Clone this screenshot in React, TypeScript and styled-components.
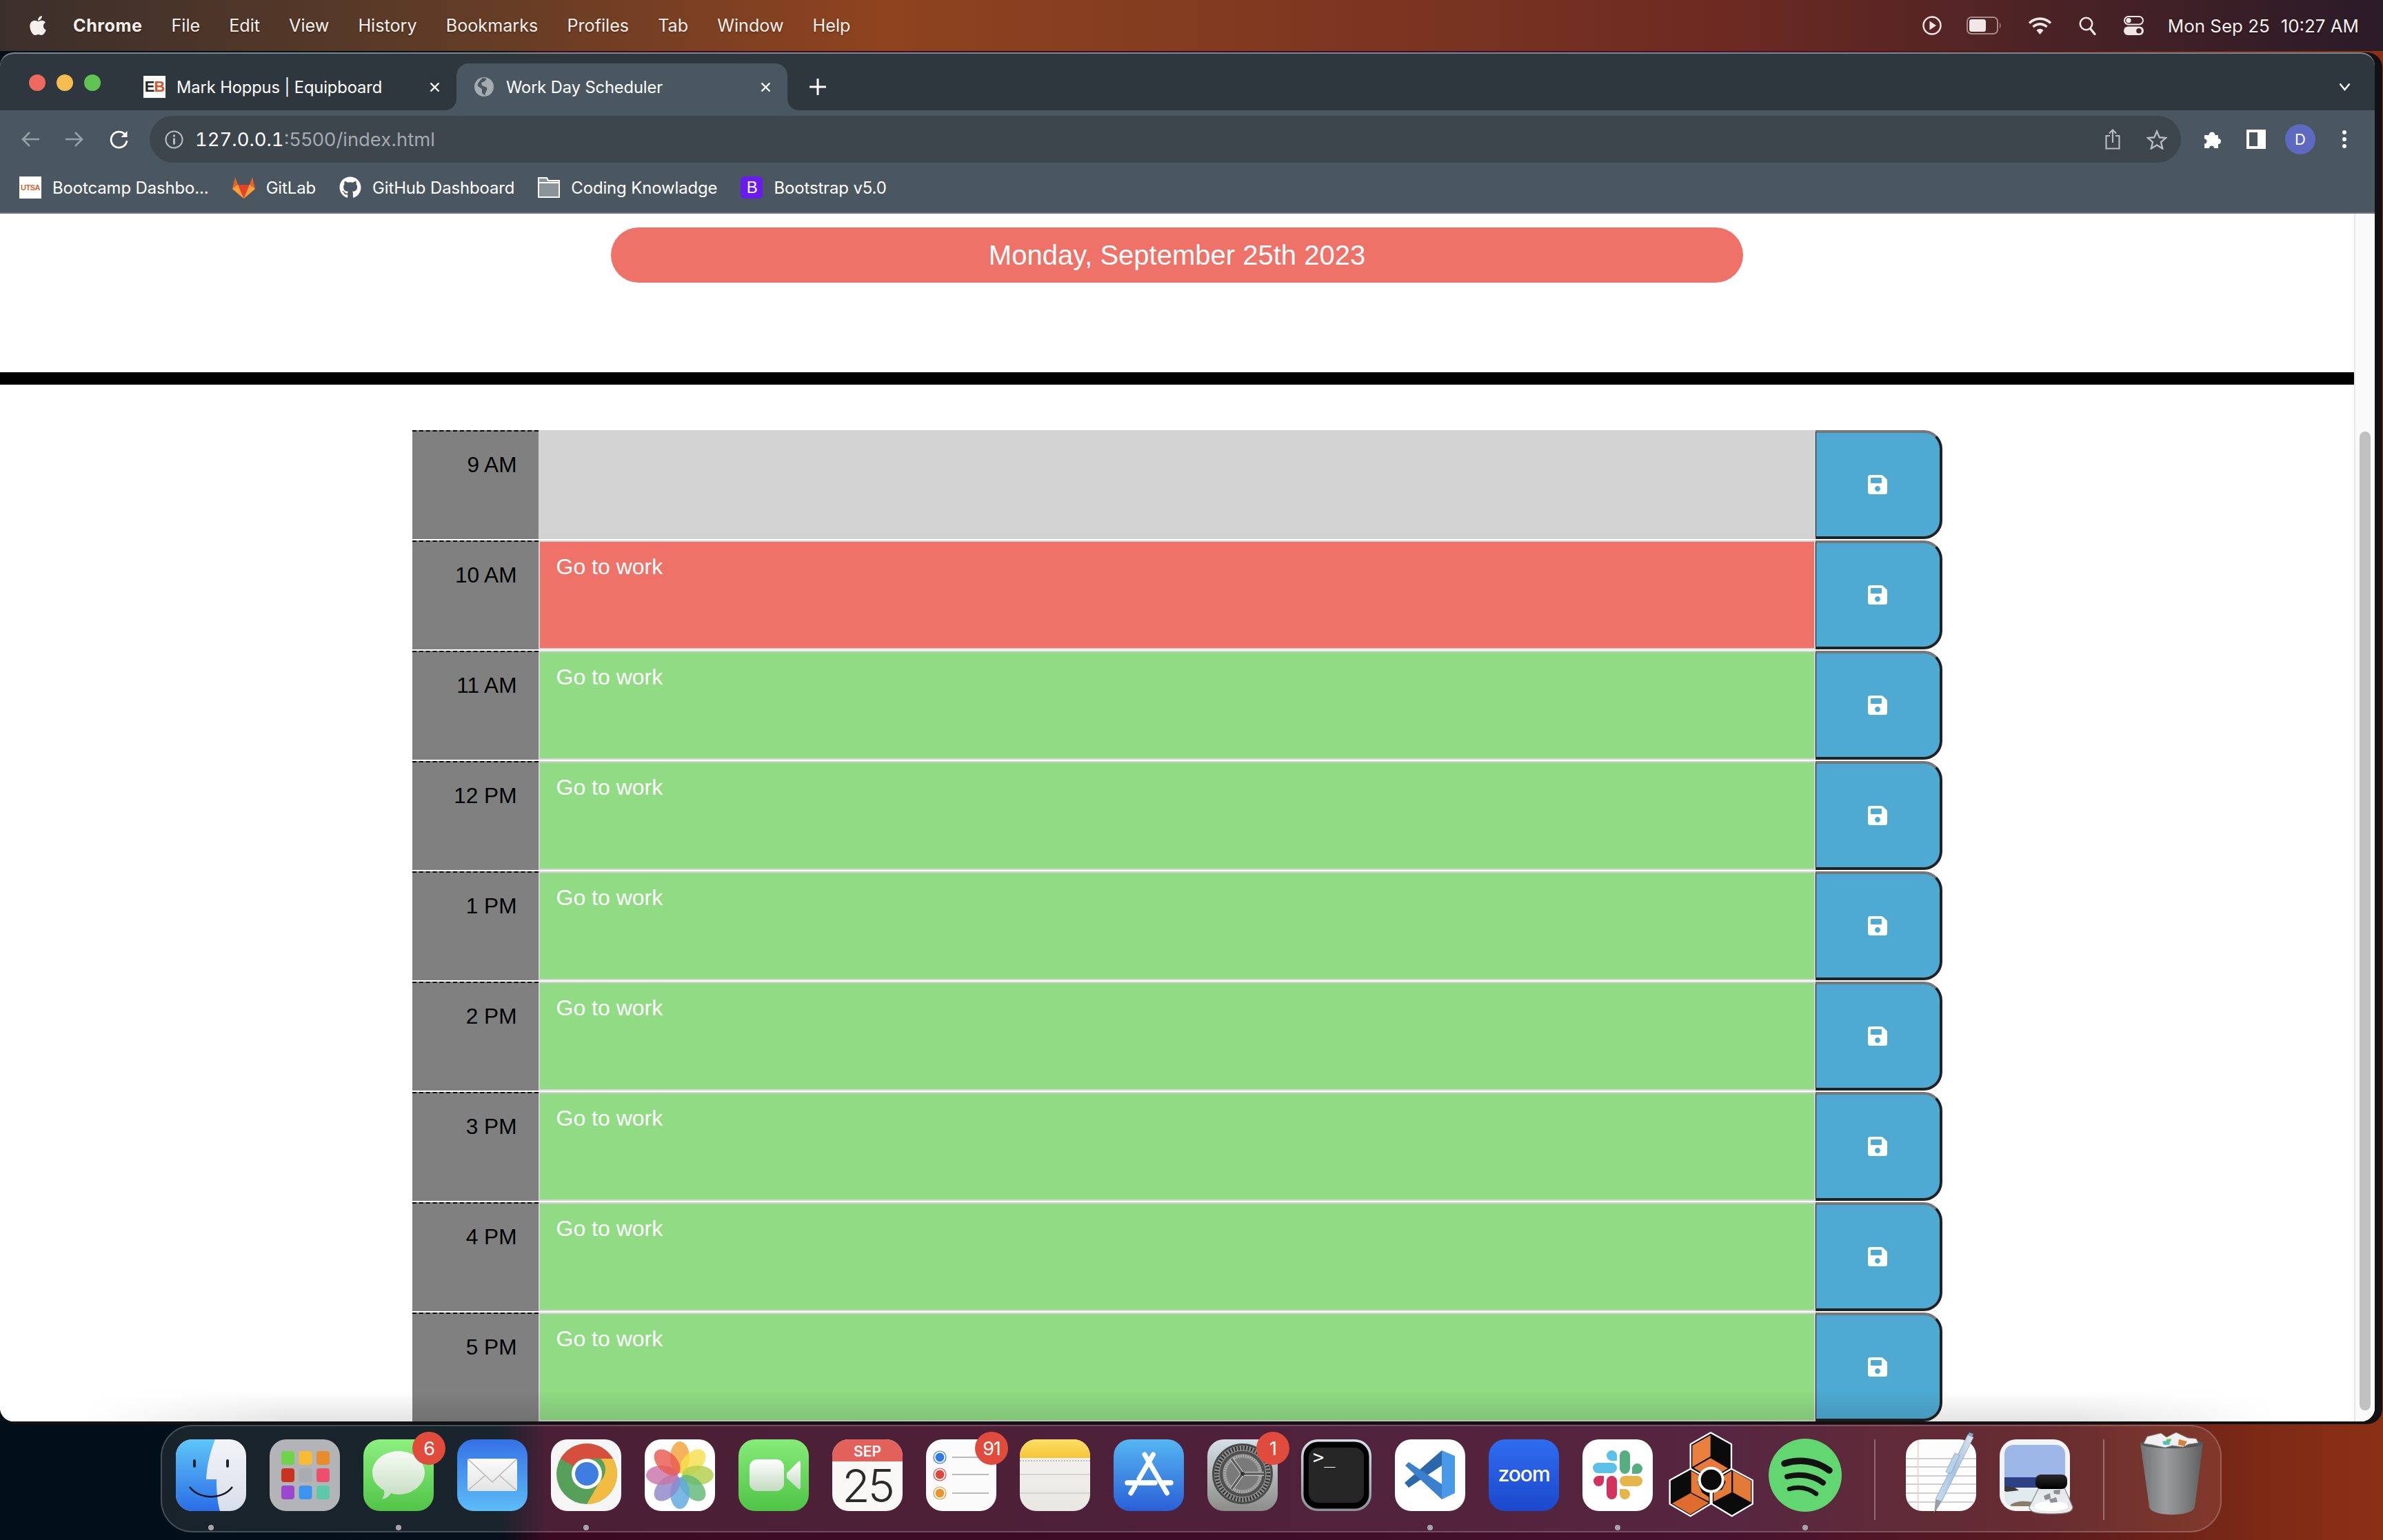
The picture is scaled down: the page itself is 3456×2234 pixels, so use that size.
import React from 'react';
import styled, { createGlobalStyle } from 'styled-components';
import { FaSave, FaApple, FaGithub } from 'react-icons/fa';

const Global = createGlobalStyle`
  html, body { margin: 0; padding: 0; background: #000; }
  * { box-sizing: border-box; }
`;

const Desktop = styled.div`
  position: relative;
  width: 3456px;
  height: 2234px;
  overflow: hidden;
  display: flex;
  flex-direction: column;
  font-family: Inter, "Liberation Sans", sans-serif;
  background: linear-gradient(90deg, #020e18 0, #05101a 21%, #3b0a22 23%, #3e0c28 50%, #47122f 72%, #5a1a1e 86%, #7d2a15 95%, #8c3015 100%);
`;

/* ---------- menu bar ---------- */
const MenuBar = styled.header`
  height: 74px;
  flex: none;
  display: flex;
  align-items: center;
  padding: 0 35px 0 40px;
  color: #f4efec;
  font-size: 25.2px;
  background: linear-gradient(90deg, #3b2f2b 0, #5c3b27 17%, #8f431f 37%, #833c20 50%, #6e2a22 72%, #4d2325 85%, #2a1b28 100%);
  text-shadow: 0 1px 3px rgba(0,0,0,.35);
`;
const AppleMark = styled(FaApple)`
  width: 30px;
  height: 32px;
  margin-right: 36px;
`;
const MenuList = styled.nav`
  display: flex;
  gap: 42px;
`;
const MenuItem = styled.span<{ $strong?: boolean }>`
  font-weight: ${p => (p.$strong ? 700 : 400)};
  letter-spacing: ${p => (p.$strong ? '0.5px' : '0')};
`;
const StatusArea = styled.div`
  margin-left: auto;
  display: flex;
  align-items: center;
`;
const StatusIcon = styled.svg<{ $gap: number }>`
  margin-right: ${p => p.$gap}px;
  display: block;
`;
const Clock = styled.span`
  display: flex;
  gap: 16px;
  font-size: 25.9px;
`;

/* ---------- browser window ---------- */
const WindowBack = styled.div`
  margin-top: 2px;
  flex: none;
  width: 3455px;
  height: 1990px;
  background: #121214;
  border-radius: 22px;
`;
const BrowserWindow = styled.main`
  position: relative;
  width: 3444px;
  height: 1986px;
  border-radius: 20px;
  overflow: hidden;
  background: #fff;
  display: flex;
  flex-direction: column;
  border-top: 2px solid #7b8790;
`;
const TabStrip = styled.div`
  height: 82px;
  flex: none;
  display: flex;
  align-items: flex-end;
  background: #2f373e;
  padding-left: 42px;
  color: #fff;
`;
const Lights = styled.div`
  align-self: center;
  display: flex;
  gap: 16px;
  margin-right: 36px;
  margin-top: 2px;
`;
const Light = styled.span<{ $c: string }>`
  width: 24px;
  height: 24px;
  border-radius: 50%;
  background: ${p => p.$c};
`;
const Tab = styled.div<{ $active?: boolean }>`
  position: relative;
  width: 480px;
  height: 68px;
  display: flex;
  align-items: center;
  padding: 0 24px 0 26px;
  gap: ${p => (p.$active ? 18 : 16)}px;
  font-size: 23.7px;
  letter-spacing: -0.1px;
  border-radius: 18px 18px 0 0;
  background: ${p => (p.$active ? '#4a5761' : 'transparent')};
  ${p => p.$active && `
    &::before, &::after {
      content: '';
      position: absolute;
      bottom: 0;
      width: 16px;
      height: 16px;
    }
    &::before { left: -16px; background: radial-gradient(circle at 0 0, transparent 15.5px, #4a5761 16px); }
    &::after { right: -16px; background: radial-gradient(circle at 100% 0, transparent 15.5px, #4a5761 16px); }
  `}
`;
const TabTitle = styled.span`
  flex: 1;
  white-space: nowrap;
`;
const Favicon = styled.span`
  width: 32px;
  height: 32px;
  flex: none;
  background: #fff;
  display: flex;
  align-items: center;
  justify-content: center;
  font: 700 22px "Liberation Sans", sans-serif;
  letter-spacing: -1px;
  color: #222;
`;
const FaviconB = styled.span`
  color: #d5582a;
`;
const PlusIcon = styled.svg`
  margin: 0 0 22px 32px;
  display: block;
`;
const TabMenu = styled.svg`
  margin: 0 35px 28px auto;
  display: block;
`;
const Toolbar = styled.div`
  height: 76px;
  flex: none;
  background: #4a5761;
  display: flex;
  padding: 8px 0 0 31px;
  align-items: center;
`;
const NavIcon = styled.svg<{ $left?: number }>`
  display: block;
  flex: none;
  margin-left: ${p => p.$left || 0}px;
`;
const Address = styled.div`
  width: 2946px;
  height: 68px;
  flex: none;
  margin: 0 31px;
  border-radius: 34px;
  background: #3e464d;
  display: flex;
  align-items: center;
  padding: 0 20px 0 22px;
`;
const Url = styled.span`
  margin-left: 17px;
  font-size: 27.4px;
  font-feature-settings: "tnum";
  color: #fff;
`;
const UrlRest = styled.span`
  color: #a4a9ad;
  font-feature-settings: normal;
`;
const PushRight = styled.span`
  margin-left: auto;
`;
const Avatar = styled.span`
  width: 44px;
  height: 44px;
  border-radius: 50%;
  background: #5d6abf;
  color: #fff;
  font-size: 22px;
  margin-left: 28px;
  flex: none;
  display: flex;
  align-items: center;
  justify-content: center;
`;
const BookmarkBar = styled.div`
  height: 74px;
  flex: none;
  background: #4a5761;
  border-bottom: 2px solid #6c7881;
  display: flex;
  align-items: center;
  padding-left: 28px;
  gap: 34px;
  color: #fff;
  font-size: 23.9px;
  letter-spacing: -0.1px;
`;
const Bookmark = styled.div`
  display: flex;
  align-items: center;
  gap: 16px;
  white-space: nowrap;
`;
const BookmarkGlyph = styled.span`
  width: 32px;
  height: 32px;
  flex: none;
  background: #fff;
  color: #d8622e;
  font: 700 11px "Liberation Sans", sans-serif;
  letter-spacing: -0.5px;
  display: flex;
  align-items: center;
  justify-content: center;
`;
const BootstrapGlyph = styled(BookmarkGlyph)`
  background: #6a1cf0;
  color: #fff;
  font-size: 24px;
  font-weight: 400;
  border-radius: 5px;
`;
const GithubGlyph = styled(FaGithub)`
  width: 32px;
  height: 32px;
  flex: none;
`;

/* ---------- scheduler page ---------- */
const Viewport = styled.div`
  flex: 1;
  min-height: 0;
  display: flex;
  overflow: hidden;
  background: #fff;
`;
const Page = styled.div`
  width: 3414px;
  flex: none;
  padding-top: 20px;
  display: flex;
  flex-direction: column;
  font-family: "Liberation Sans", Arial, sans-serif;
`;
const DatePill = styled.div`
  width: 1642px;
  height: 80px;
  align-self: center;
  border-radius: 40px;
  background: #ee7267;
  color: #fff;
  font-size: 40px;
  display: flex;
  align-items: center;
  justify-content: center;
`;
const Rule = styled.hr`
  margin: 130px 0 66px;
  height: 18px;
  border: 0;
  background: #000;
  flex: none;
`;
const Rows = styled.section`
  width: 2219px;
  align-self: center;
  display: flex;
  flex-direction: column;
  gap: 2px;
`;
const Row = styled.div`
  height: 158px;
  flex: none;
  display: grid;
  grid-template-columns: 183px 1fr 184px;
`;
const Hour = styled.div`
  background: #808080;
  border-top: 2px dashed #000;
  color: #000;
  font-size: 31.6px;
  text-align: right;
  padding: 30px 31px 0 0;
`;
const EVENT_BG = { past: '#d3d3d3', present: '#ee7267', future: '#90db84' };
const EventCell = styled.div<{ $tense: keyof typeof EVENT_BG }>`
  background: ${p => EVENT_BG[p.$tense]};
  border: 2px solid #d3d3d3;
  color: #fff;
  font-size: 32px;
  padding: 18px 0 0 24px;
`;
const SaveButton = styled.button`
  background: #4eaad2;
  color: #fff;
  border-style: solid;
  border-width: 4px 4px 4px 1px;
  border-color: #777 #222 #222 #111;
  border-radius: 0 27px 27px 0;
  padding: 0;
  display: flex;
  align-items: center;
  justify-content: center;
`;
const SaveGlyph = styled(FaSave)`
  width: 32px;
  height: 32px;
`;
const ScrollTrack = styled.div`
  width: 30px;
  flex: none;
  background: #fafafa;
  border-left: 2px solid #e8e8e8;
  padding: 316px 6px 0 6px;
`;
const ScrollThumb = styled.div`
  height: 1420px;
  border-radius: 8px;
  background: #c1c1c1;
`;
const DockShadow = styled.div`
  position: absolute;
  left: 0;
  right: 0;
  bottom: 0;
  height: 44px;
  pointer-events: none;
  background: linear-gradient(180deg, rgba(0,0,0,0), rgba(0,0,0,.11));
  mask-image: linear-gradient(90deg, transparent 120px, #000 420px, #000 3000px, transparent 3300px);
`;

/* ---------- dock ---------- */
const Dock = styled.footer`
  margin: 1px 0 0 233px;
  width: 2989px;
  height: 156px;
  flex: none;
  border: 2px solid rgba(255,255,255,.2);
  border-radius: 46px;
  background: rgba(255,255,255,.085);
  display: flex;
  gap: 34px;
  padding: 19px 0 0 20px;
`;
const DockItem = styled.div`
  position: relative;
  width: 102px;
  height: 104px;
  flex: none;
`;
const TileSvg = styled.svg`
  display: block;
  width: 102px;
  height: 104px;
  overflow: visible;
`;
const ReasonSvg = styled.svg`
  position: absolute;
  left: -21px;
  top: -18px;
  width: 150px;
  height: 140px;
`;
const Badge = styled.span`
  position: absolute;
  left: 71px;
  top: -11px;
  width: 48px;
  height: 48px;
  border-radius: 50%;
  background: #e14b3b;
  color: #fff;
  font: 400 27px Inter, sans-serif;
  letter-spacing: -1px;
  display: flex;
  align-items: center;
  justify-content: center;
`;
const RunDot = styled.span`
  position: absolute;
  left: 47px;
  top: 124px;
  width: 8px;
  height: 8px;
  border-radius: 50%;
  background: #a8a3ad;
`;
const DockDivider = styled.span<{ $l: number; $r: number }>`
  width: 2px;
  height: 117px;
  flex: none;
  margin: 0 ${p => p.$r}px 0 ${p => p.$l}px;
  background: rgba(255,255,255,.3);
`;

/* ---------- dock drawings ---------- */
const Tile = ({ children, defs }: { children: React.ReactNode; defs?: React.ReactNode }) => (
  <TileSvg viewBox="0 0 102 104">
    {defs && <defs>{defs}</defs>}
    {children}
  </TileSvg>
);
const Grad = ({ id, a, b }: { id: string; a: string; b: string }) => (
  <linearGradient id={id} x1="0" y1="0" x2="0" y2="1">
    <stop offset="0" stopColor={a} />
    <stop offset="1" stopColor={b} />
  </linearGradient>
);
const R = 24;

const Finder = () => (
  <Tile defs={<>
    <Grad id="fb" a="#5fc6f9" b="#2a6de6" />
    <Grad id="fw" a="#f2f4f8" b="#d8deeb" />
    <clipPath id="fc"><rect width="102" height="104" rx={R} /></clipPath>
  </>}>
    <g clipPath="url(#fc)">
      <rect width="102" height="104" fill="url(#fw)" />
      <path d="M0 0H57C50 18 45 38 44 58H59C59 74 60 90 64 104H0Z" fill="url(#fb)" />
    </g>
    <rect x="25" y="29" width="4" height="12" rx="2" fill="#1c2530" />
    <rect x="73" y="29" width="4" height="12" rx="2" fill="#1c2530" />
    <path d="M20 69C34 88 68 88 82 69" fill="none" stroke="#151a22" strokeWidth="2.5" />
  </Tile>
);
const Launchpad = () => {
  const colors = ['#6fd44a', '#f8bb33', '#e98c2c', '#c8321f', '#a8adb0', '#ee4f6a', '#9a48d0', '#3a95f0', '#5cc9a8'];
  return (
    <Tile>
      <rect width="102" height="104" rx={R} fill="#b2b4b7" />
      {colors.map((c, i) => (
        <rect key={c} x={17 + (i % 3) * 25.5} y={17 + Math.floor(i / 3) * 25} width="19" height="20" rx="4" fill={c} />
      ))}
    </Tile>
  );
};
const Messages = () => (
  <Tile defs={<><Grad id="mg" a="#8cf07f" b="#50c548" /><Grad id="mw" a="#f6fbf4" b="#c4dcc0" /></>}>
    <rect width="102" height="104" rx={R} fill="url(#mg)" />
    <path d="M30 74C20 68 13 60 13 48 13 31 30 17 51 17S89 31 89 48 72 80 51 80C47 80 43 79 40 78 38 82 33 86 27 87 30 83 31 78 30 74Z" fill="url(#mw)" />
  </Tile>
);
const Mail = () => (
  <Tile defs={<><Grad id="ma" a="#3571e6" b="#5cbdf7" /><Grad id="me" a="#fbfbfb" b="#e4e4e4" /></>}>
    <rect width="102" height="104" rx={R} fill="url(#ma)" />
    <rect x="15" y="28" width="72" height="47" rx="3" fill="url(#me)" />
    <path d="M16 29L51 62 86 29M16 74L41 52M86 74L61 52" fill="none" stroke="#b9b9b9" strokeWidth="1.6" />
  </Tile>
);
const Chrome = () => (
  <Tile>
    <rect width="102" height="104" rx={R} fill="#f6f6f6" />
    <circle cx="52" cy="50" r="44" fill="#57a05a" />
    <path d="M14 28A44 44 0 0 1 90 28H52A22 22 0 0 0 33 39Z" fill="#d64f3c" />
    <path d="M90 28A44 44 0 0 1 52 94L71 61A22 22 0 0 0 72 28Z" fill="#f2bc42" />
    <circle cx="52" cy="50" r="22" fill="#fff" />
    <circle cx="52" cy="50" r="17" fill="#3f7de0" />
  </Tile>
);
const Photos = () => {
  const colors = ['#f5a13a', '#f5e04a', '#b2d04a', '#60b878', '#5fa8e0', '#8f86c8', '#c875a8', '#e85a50'];
  return (
    <Tile>
      <rect width="102" height="104" rx={R} fill="#fff" />
      {colors.map((c, i) => (
        <ellipse key={c} cx="51" cy="26" rx="14" ry="23" fill={c} opacity=".82" transform={`rotate(${i * 45} 51 52)`} />
      ))}
      <circle cx="51" cy="52" r="2" fill="#fff" />
    </Tile>
  );
};
const FaceTime = () => (
  <Tile defs={<><Grad id="ft" a="#85ec78" b="#4fc447" /><Grad id="fv" a="#fff" b="#c4d9c2" /></>}>
    <rect width="102" height="104" rx={R} fill="url(#ft)" />
    <rect x="16" y="29" width="50" height="46" rx="11" fill="url(#fv)" />
    <path d="M70 49L87 32C88.5 31 90 32 90 34V70C90 72 88.5 73 87 72L70 56Z" fill="url(#fv)" />
  </Tile>
);
const Calendar = () => (
  <Tile defs={<clipPath id="cc"><rect width="102" height="104" rx={R} /></clipPath>}>
    <g clipPath="url(#cc)">
      <rect width="102" height="104" fill="#f9f8f6" />
      <rect width="102" height="32" fill="#e2625b" />
    </g>
    <text x="51" y="25" textAnchor="middle" fontFamily="Inter, sans-serif" fontWeight="600" fontSize="21" fill="#fff">SEP</text>
    <text x="51" y="91" textAnchor="middle" fontFamily="Inter, sans-serif" fontWeight="300" fontSize="66" letterSpacing="-3" fill="#2a2a2a">25</text>
  </Tile>
);
const Reminders = () => (
  <Tile>
    <rect width="102" height="104" rx={R} fill="#fbfbfb" />
    {[['#2f78ea', 26], ['#e0443a', 51], ['#ea9430', 78]].map(([c, y]) => (
      <g key={c as string}>
        <circle cx="20" cy={y as number} r="7" fill={c as string} stroke="#fff" strokeWidth="1.2" />
        <circle cx="20" cy={y as number} r="9" fill="none" stroke={c as string} strokeWidth="1.2" />
        <rect x="38" y={(y as number) - 1} width="53" height="2" fill="#bbb" />
      </g>
    ))}
  </Tile>
);
const Notes = () => (
  <Tile defs={<>
    <Grad id="ny" a="#fbdf63" b="#f7c53a" />
    <Grad id="nb" a="#f6f4f0" b="#e9e7e2" />
    <clipPath id="nc"><rect width="102" height="104" rx={R} /></clipPath>
  </>}>
    <g clipPath="url(#nc)">
      <rect width="102" height="104" fill="url(#nb)" />
      <rect width="102" height="27" fill="url(#ny)" />
      <line x1="0" y1="31" x2="102" y2="31" stroke="#bbb" strokeWidth="2" strokeDasharray="2 2" />
      <rect y="50" width="102" height="2" fill="#d6d4d0" />
      <rect y="77" width="102" height="2" fill="#d6d4d0" />
    </g>
  </Tile>
);
const AppStore = () => (
  <Tile defs={<Grad id="as" a="#55b6f1" b="#2a5fd8" />}>
    <rect width="102" height="104" rx={R} fill="url(#as)" />
    <path d="M57.5 22L37 57M31 68L25 78M45 22L77.5 78" stroke="#fff" strokeWidth="7" strokeLinecap="round" fill="none" />
    <path d="M20 63H60M70 63H83" stroke="#fff" strokeWidth="7.5" strokeLinecap="round" />
  </Tile>
);
const Settings = () => (
  <Tile defs={<Grad id="st" a="#d5e0e6" b="#8c8c8a" />}>
    <rect width="102" height="104" rx={R} fill="url(#st)" />
    <circle cx="51" cy="50" r="44" fill="#8b8b8b" />
    <circle cx="51" cy="50" r="42.5" fill="none" stroke="#4a4a4a" strokeWidth="3" />
    <circle cx="51" cy="50" r="37.5" fill="none" stroke="#2e2e2e" strokeWidth="6" strokeDasharray="2 2.6" />
    <circle cx="51" cy="50" r="31" fill="none" stroke="#505050" strokeWidth="4.5" />
    <circle cx="51" cy="50" r="26" fill="none" stroke="#b0b0b0" strokeWidth="4" strokeDasharray="1.6 1.8" />
    <circle cx="51" cy="50" r="23" fill="#7a7a7a" />
    <path d="M51 50L35 28M51 50H82M51 50L35 72" stroke="#dadada" strokeWidth="5.5" />
    <path d="M51 50L35 28M51 50H82M51 50L35 72" stroke="#5c5c5c" strokeWidth="3.5" />
    <circle cx="51" cy="50" r="3" fill="#333" />
  </Tile>
);
const Terminal = () => (
  <Tile defs={<Grad id="tm" a="#d3e0e4" b="#8b9296" />}>
    <rect width="102" height="104" rx={R} fill="url(#tm)" />
    <rect x="3.5" y="3.5" width="95" height="97" rx="21" fill="#000" />
    <rect x="11" y="12" width="80" height="80" rx="14" fill="#262626" />
    <text x="17" y="35" fontFamily="'DejaVu Sans Mono', monospace" fontSize="27" fill="#fff">&gt;_</text>
  </Tile>
);
const VSCode = () => (
  <Tile>
    <rect width="102" height="104" rx={R} fill="#fff" />
    <path d="M68 16V38L20 70 14 63Z" fill="#2a67ab" />
    <path d="M15 38L20 33 68 65V87Z" fill="#3a80cc" />
    <path d="M68 16L87 24V78L68 87Z" fill="#4a98e8" />
  </Tile>
);
const Zoom = () => (
  <Tile defs={<Grad id="zm" a="#2f6cf0" b="#1c48cc" />}>
    <rect width="102" height="104" rx={R} fill="url(#zm)" />
    <text x="51" y="61" textAnchor="middle" fontFamily="Inter, sans-serif" fontWeight="500" fontSize="30" letterSpacing="-1" fill="#fff">zoom</text>
  </Tile>
);
const Slack = () => (
  <Tile>
    <rect width="102" height="104" rx={R} fill="#fff" />
    <rect x="15" y="34" width="35" height="15" rx="7.5" fill="#5cc0ea" />
    <path d="M50 31H42.5A7.5 7.5 0 1 1 50 23.5Z" fill="#5cc0ea" />
    <rect x="54" y="16" width="15" height="34" rx="7.5" fill="#55ae80" />
    <path d="M72 50V42.5A7.5 7.5 0 1 1 79.5 50Z" fill="#55ae80" />
    <rect x="35" y="53" width="15" height="34" rx="7.5" fill="#d2325e" />
    <path d="M31 53V60.5A7.5 7.5 0 1 1 23.5 53Z" fill="#d2325e" />
    <rect x="54" y="53" width="33" height="15" rx="7.5" fill="#e5b54a" />
    <path d="M54 72H61.5A7.5 7.5 0 1 1 54 79.5Z" fill="#e5b54a" />
  </Tile>
);
const Reason = () => (
  <ReasonSvg viewBox="0 0 450 420">
    <g fill="#0b0b0b" stroke="#fff" strokeWidth="7" strokeLinejoin="round">
      <path d="M213 25L303 75V182L213 235 125 182V75Z" />
      <path d="M125 182L212 232V335L125 388 35 335V232Z" />
      <path d="M303 182L395 232V335L305 388 218 335V232Z" />
    </g>
    <path d="M133 80L212 36V128L133 174Z" fill="#e9803f" />
    <path d="M139 178L212 136 288 180 255 200 215 176 175 200Z" fill="#e8793a" />
    <path d="M128 191L170 215 156 240 175 285 205 305V325L128 285Z" fill="#e47a38" />
    <path d="M45 333L125 288 205 331 125 380Z" fill="#dd6c2e" />
    <path d="M310 191L388 235V328L310 285Z" fill="#e47a38" />
    <path d="M226 325V285L262 272 278 240 265 215 303 191V285Z" fill="#e47a38" />
    <path d="M215 280V338" stroke="#fff" strokeWidth="8" />
    <circle cx="215" cy="230" r="51" fill="#0b0b0b" stroke="#fff" strokeWidth="12" />
  </ReasonSvg>
);
const Spotify = () => (
  <Tile>
    <circle cx="51" cy="52" r="53" fill="#62d671" />
    <g fill="none" stroke="#121212" strokeLinecap="round">
      <path d="M21 35C43 28 67 31 86 45" strokeWidth="9.5" />
      <path d="M25 54C43 49 62 52 77 63" strokeWidth="8" />
      <path d="M28 72C42 68 56 71 67 79" strokeWidth="6.5" />
    </g>
  </Tile>
);
const TextEdit = () => (
  <Tile defs={<>
    <clipPath id="te"><rect width="102" height="104" rx={R} /></clipPath>
    <linearGradient id="pen" x1="0" y1="0" x2="1" y2="0">
      <stop offset="0" stopColor="#c9dff3" /><stop offset=".5" stopColor="#a5c4e2" /><stop offset="1" stopColor="#dfe6ec" />
    </linearGradient>
  </>}>
    <g clipPath="url(#te)">
      <rect width="102" height="104" fill="#fdfdfd" />
      {[27, 39, 52, 64, 77, 90].map(y => (
        <rect key={y} y={y} width="102" height="2" fill="#cfcfcf" />
      ))}
      <rect x="17" width="1.5" height="104" fill="#f3cccc" />
    </g>
    <path d="M90 -7L98 -3 52 90 43 87Z" fill="url(#pen)" stroke="#8ba2b8" strokeWidth=".8" />
    <path d="M71 20L58 47 65 50 78 23Z" fill="#b7d1ea" stroke="#7d93a8" strokeWidth=".6" />
    <path d="M43 87L52 90 41 108Z" fill="#9aa0a6" />
    <path d="M43 103L41 108 45 105Z" fill="#222" />
    <path d="M92 -10L98 -8 96 -3 90 -6Z" fill="#7ea6cc" />
  </Tile>
);
const Preview = () => (
  <Tile defs={<>
    <clipPath id="pv"><rect x="7" y="8" width="88" height="89" rx="13" /></clipPath>
    <Grad id="cap" a="#2a2a2a" b="#000" />
    <Grad id="gl" a="#dfe5ea" b="#f4f6f8" />
  </>}>
    <rect width="102" height="104" rx={R} fill="#f4f4f4" />
    <g clipPath="url(#pv)">
      <rect x="7" y="8" width="88" height="47" fill="#9db8e8" />
      <rect x="7" y="55" width="88" height="18" fill="#2d3f85" />
      <rect x="7" y="70" width="88" height="27" fill="#dfe9ee" />
      <path d="M7 68L22 70 28 74 10 76 7 75Z" fill="#3b3a38" />
      <path d="M14 97C20 89 38 88 50 92V97Z" fill="#8a7c68" />
    </g>
    <path d="M57 70H94L106 98C106 106 96 108 75 108S43 106 43 98Z" fill="url(#gl)" fillOpacity=".94" stroke="#8a8a8a" strokeWidth="1.2" />
    <ellipse cx="75" cy="97" rx="24" ry="7" fill="#fff" />
    <path d="M64 82L73 78 74 86 66 88ZM78 74L88 73 87 80 79 79ZM72 87L82 84 84 91 74 92Z" fill="#8e8f92" />
    <rect x="52" y="51" width="46" height="21" rx="8" fill="url(#cap)" />
  </Tile>
);
const Trash = () => (
  <Tile defs={<linearGradient id="tr" x1="0" x2="1" y1="0" y2="0">
    <stop offset="0" stopColor="#6f7173" /><stop offset=".4" stopColor="#9a9c9e" /><stop offset=".7" stopColor="#7e8082" /><stop offset="1" stopColor="#5c5e60" />
  </linearGradient>}>
    <path d="M8 5L21 98C24 113 84 113 87 98L99 5Z" fill="url(#tr)" />
    <ellipse cx="53.5" cy="6" rx="45.5" ry="7" fill="#55575a" />
    <path d="M13 6L18 -4 38 -9 46 -3 60 -10 77 -2 89 -1 92 5 78 7 70 11 54 9 44 12 26 8Z" fill="#f0f0f0" stroke="#8a8a8a" strokeWidth=".8" />
    <path d="M40 3L52 1 50 8 42 8Z" fill="#4ec0c8" />
    <path d="M64 0L76 3 72 10 63 8Z" fill="#d9803a" />
    <path d="M46 0L53 -1 52 3 46 4Z" fill="#6cc05a" />
  </Tile>
);

const MENUS = ['File', 'Edit', 'View', 'History', 'Bookmarks', 'Profiles', 'Tab', 'Window', 'Help'];
const HOURS: { label: string; tense: keyof typeof EVENT_BG; text: string }[] = [
  { label: '9 AM', tense: 'past', text: '' },
  { label: '10 AM', tense: 'present', text: 'Go to work' },
  { label: '11 AM', tense: 'future', text: 'Go to work' },
  { label: '12 PM', tense: 'future', text: 'Go to work' },
  { label: '1 PM', tense: 'future', text: 'Go to work' },
  { label: '2 PM', tense: 'future', text: 'Go to work' },
  { label: '3 PM', tense: 'future', text: 'Go to work' },
  { label: '4 PM', tense: 'future', text: 'Go to work' },
  { label: '5 PM', tense: 'future', text: 'Go to work' },
];
const DOCK: { Icon: React.FC; badge?: string; dot?: boolean }[] = [
  { Icon: Finder, dot: true },
  { Icon: Launchpad },
  { Icon: Messages, badge: '6', dot: true },
  { Icon: Mail },
  { Icon: Chrome, dot: true },
  { Icon: Photos },
  { Icon: FaceTime },
  { Icon: Calendar },
  { Icon: Reminders, badge: '91' },
  { Icon: Notes },
  { Icon: AppStore },
  { Icon: Settings, badge: '1' },
  { Icon: Terminal },
  { Icon: VSCode, dot: true },
  { Icon: Zoom },
  { Icon: Slack, dot: true },
  { Icon: Reason },
  { Icon: Spotify, dot: true },
];

const CloseX = () => (
  <svg width="15" height="15" viewBox="0 0 15 15" style={{ flex: 'none' }}>
    <path d="M1.5 1.5L13.5 13.5M13.5 1.5L1.5 13.5" stroke="#fff" strokeWidth="2.4" />
  </svg>
);

export default function App() {
  return (
    <Desktop>
      <Global />
      <MenuBar>
        <AppleMark />
        <MenuList>
          <MenuItem $strong>Chrome</MenuItem>
          {MENUS.map(m => <MenuItem key={m}>{m}</MenuItem>)}
        </MenuList>
        <StatusArea>
          <StatusIcon $gap={36} width="28" height="28" viewBox="0 0 28 28">
            <circle cx="14" cy="14" r="12.5" fill="none" stroke="#f0e8e6" strokeWidth="2.4" />
            <path d="M10.5 7.5L20 14 10.5 20.5Z" fill="#f0e8e6" />
          </StatusIcon>
          <StatusIcon $gap={38} width="51" height="26" viewBox="0 0 51 26">
            <rect x="1" y="1" width="44" height="24" rx="6" fill="none" stroke="#a88a88" strokeWidth="2" />
            <rect x="4" y="4" width="24" height="18" rx="3.5" fill="#f0e8e6" />
            <path d="M48 9C50 10 50 16 48 17Z" fill="#a88a88" />
          </StatusIcon>
          <StatusIcon $gap={39} width="35" height="26" viewBox="0 0 35 26">
            <g fill="none" stroke="#f0e8e6" strokeWidth="3.6">
              <path d="M2 9.5C11 1 24 1 33 9.5" />
              <path d="M7.5 15C13.5 9.5 21.5 9.5 27.5 15" />
            </g>
            <path d="M12.5 20C15.5 17 19.5 17 22.5 20L17.5 26Z" fill="#f0e8e6" />
          </StatusIcon>
          <StatusIcon $gap={40} width="25" height="27" viewBox="0 0 25 27">
            <circle cx="10.5" cy="10.5" r="8.7" fill="none" stroke="#f0e8e6" strokeWidth="2.6" />
            <path d="M16.5 17.5L23 25.5" stroke="#f0e8e6" strokeWidth="3.4" strokeLinecap="round" />
          </StatusIcon>
          <StatusIcon $gap={35} width="29" height="28" viewBox="0 0 29 28">
            <rect x="1" y="1" width="27" height="11.5" rx="5.7" fill="none" stroke="#f0e8e6" strokeWidth="2" />
            <circle cx="7" cy="6.7" r="3.6" fill="#f0e8e6" />
            <rect x="0" y="15.5" width="29" height="12.5" rx="6.2" fill="#f0e8e6" />
            <circle cx="22" cy="21.7" r="3.8" fill="#4a2025" />
          </StatusIcon>
          <Clock><span>Mon Sep 25</span><span>10:27 AM</span></Clock>
        </StatusArea>
      </MenuBar>

      <WindowBack>
        <BrowserWindow>
          <TabStrip>
            <Lights>
              <Light $c="#ee6a5e" />
              <Light $c="#f5bd4f" />
              <Light $c="#61c354" />
            </Lights>
            <Tab>
              <Favicon>E<FaviconB>B</FaviconB></Favicon>
              <TabTitle>Mark Hoppus | Equipboard</TabTitle>
              <CloseX />
            </Tab>
            <Tab $active>
              <svg width="28" height="28" viewBox="0 0 28 28" style={{ flex: 'none' }}>
                <circle cx="14" cy="14" r="14" fill="#a4abb1" />
                <path d="M12 1C7 6 4 9 5 13L11 17 11 23 16 27C14 22 20 19 18 15L11 12 10 8 15 6 18 2Z" fill="#4a5761" />
              </svg>
              <TabTitle>Work Day Scheduler</TabTitle>
              <CloseX />
            </Tab>
            <PlusIcon width="24" height="24" viewBox="0 0 24 24">
              <path d="M12 0V24M0 12H24" stroke="#fff" strokeWidth="3" />
            </PlusIcon>
            <TabMenu width="17" height="12" viewBox="0 0 17 12">
              <path d="M1.5 1.5L8.5 10 15.5 1.5" fill="none" stroke="#fff" strokeWidth="2.4" />
            </TabMenu>
          </TabStrip>

          <Toolbar>
            <NavIcon width="26" height="24" viewBox="0 0 26 24">
              <path d="M26 12H3M12 2L2 12 12 22" fill="none" stroke="#98a1a8" strokeWidth="2.6" />
            </NavIcon>
            <NavIcon $left={38} width="26" height="24" viewBox="0 0 26 24">
              <path d="M0 12H23M14 2L24 12 14 22" fill="none" stroke="#98a1a8" strokeWidth="2.6" />
            </NavIcon>
            <NavIcon $left={38} width="27" height="27" viewBox="0 0 27 27">
              <path d="M23 7A11.5 11.5 0 1 0 25 15" fill="none" stroke="#fff" strokeWidth="2.8" />
              <path d="M25.5 1V10H16.5Z" fill="#fff" />
            </NavIcon>
            <Address>
              <NavIcon width="27" height="27" viewBox="0 0 27 27">
                <circle cx="13.5" cy="13.5" r="12" fill="none" stroke="#b8bcc0" strokeWidth="2.2" />
                <rect x="12" y="11.5" width="3" height="9" fill="#b8bcc0" />
                <rect x="12" y="6.5" width="3" height="3" fill="#b8bcc0" />
              </NavIcon>
              <Url>127.0.0.1<UrlRest>:5500/index.html</UrlRest></Url>
              <PushRight />
              <NavIcon width="22" height="30" viewBox="0 0 22 30">
                <path d="M7 10H1.5V28.5H20.5V10H15" fill="none" stroke="#b8bcc0" strokeWidth="2.2" />
                <path d="M11 20V2M6 6.5L11 1.5 16 6.5" fill="none" stroke="#b8bcc0" strokeWidth="2.2" />
              </NavIcon>
              <NavIcon $left={38} width="30" height="29" viewBox="0 0 30 29">
                <path d="M15 2.5L18.7 11.3 28.2 12 21 18.2 23.2 27.5 15 22.5 6.8 27.5 9 18.2 1.8 12 11.3 11.3Z" fill="none" stroke="#b8bcc0" strokeWidth="2.4" />
              </NavIcon>
            </Address>
            <NavIcon width="28" height="28" viewBox="0 0 28 28">
              <path d="M3 8H9.5A4.5 4.5 0 1 1 18.5 8H23V13A4 4 0 1 1 23 21V27H17A3.5 3.5 0 0 0 10 27H3V20.5A3.5 3.5 0 0 0 3 13.5Z" fill="#fff" />
            </NavIcon>
            <NavIcon $left={36} width="28" height="28" viewBox="0 0 28 28">
              <rect width="28" height="28" fill="#fff" />
              <rect x="4" y="4" width="12" height="20" fill="#4a5761" />
            </NavIcon>
            <Avatar>D</Avatar>
            <NavIcon $left={36} width="12" height="28" viewBox="0 0 12 28">
              <circle cx="6" cy="4" r="3" fill="#fff" />
              <circle cx="6" cy="14" r="3" fill="#fff" />
              <circle cx="6" cy="24" r="3" fill="#fff" />
            </NavIcon>
          </Toolbar>

          <BookmarkBar>
            <Bookmark><BookmarkGlyph>UTSA</BookmarkGlyph>Bootcamp Dashbo...</Bookmark>
            <Bookmark>
              <svg width="33" height="32" viewBox="0 0 33 32" style={{ flex: 'none' }}>
                <path d="M4 1L8 12H25L29 1 33 18 16.5 32 0 18Z" fill="#e8632c" />
                <path d="M8 12H25L16.5 32Z" fill="#e24329" />
                <path d="M0 18L8 12 16.5 32ZM33 18L25 12 16.5 32Z" fill="#f9a23a" />
              </svg>
              GitLab
            </Bookmark>
            <Bookmark><GithubGlyph />GitHub Dashboard</Bookmark>
            <Bookmark>
              <svg width="32" height="30" viewBox="0 0 32 30" style={{ flex: 'none' }}>
                <path d="M1 1H13L15 5H31V29H1Z" fill="#8b949b" stroke="#fff" strokeWidth="2" />
                <path d="M1 8H31" stroke="#fff" strokeWidth="2" />
              </svg>
              Coding Knowladge
            </Bookmark>
            <Bookmark><BootstrapGlyph>B</BootstrapGlyph>Bootstrap v5.0</Bookmark>
          </BookmarkBar>

          <Viewport>
            <Page>
              <DatePill>Monday, September 25th 2023</DatePill>
              <Rule />
              <Rows>
                {HOURS.map(h => (
                  <Row key={h.label}>
                    <Hour>{h.label}</Hour>
                    <EventCell $tense={h.tense}>{h.text}</EventCell>
                    <SaveButton aria-label="Save"><SaveGlyph /></SaveButton>
                  </Row>
                ))}
              </Rows>
            </Page>
            <ScrollTrack><ScrollThumb /></ScrollTrack>
          </Viewport>
          <DockShadow />
        </BrowserWindow>
      </WindowBack>

      <Dock>
        {DOCK.map(({ Icon, badge, dot }, i) => (
          <DockItem key={i}>
            <Icon />
            {badge && <Badge>{badge}</Badge>}
            {dot && <RunDot />}
          </DockItem>
        ))}
        <DockDivider $l={15} $r={10} />
        <DockItem><TextEdit /></DockItem>
        <DockItem><Preview /></DockItem>
        <DockDivider $l={14} $r={10} />
        <DockItem><Trash /></DockItem>
      </Dock>
    </Desktop>
  );
}
